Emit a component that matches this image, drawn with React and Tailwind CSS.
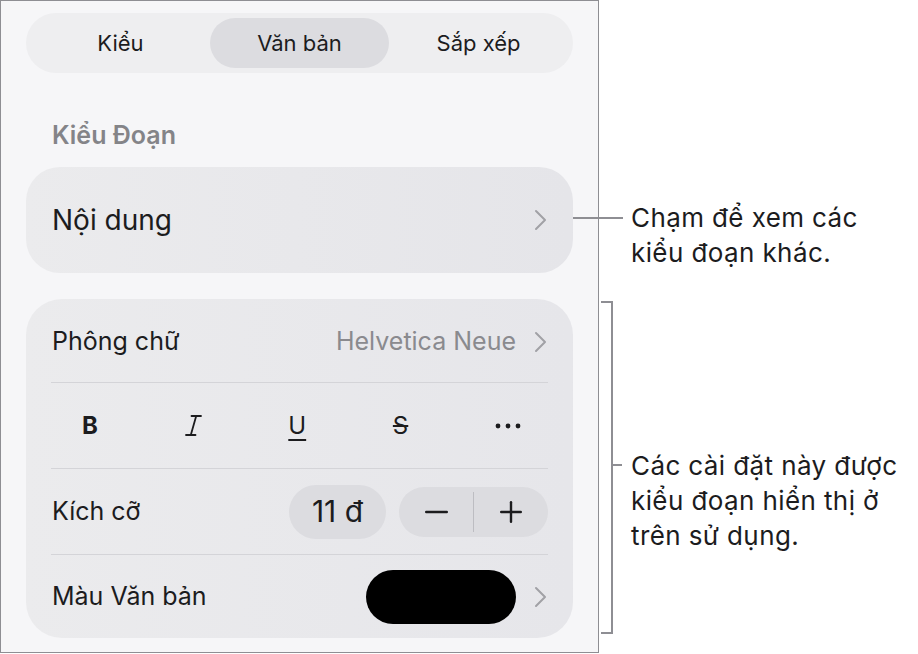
import React from "react";

const Chevron = () => (
  <svg width="13" height="22" viewBox="0 0 13 22" fill="none" className="shrink-0">
    <polyline points="2,2 11,11 2,20" stroke="#a1a1a6" strokeWidth="2" strokeLinecap="round" strokeLinejoin="round" />
  </svg>
);

const Divider = () => <div className="mx-[25px] h-px bg-[#d4d4d8]" />;

const Segment = () => {
  const tabs = ["Kiểu", "Văn bản", "Sắp xếp"];
  return (
    <div className="flex h-[60px] items-center rounded-full bg-[#eeeef0] px-[5px]">
      {tabs.map((t, i) => (
        <div
          key={t}
          className={`flex h-[50px] flex-1 items-center justify-center rounded-full text-[22px] text-[#1c1c1e] ${
            i === 1 ? "bg-[#dcdce0]" : ""
          }`}
        >
          {t}
        </div>
      ))}
    </div>
  );
};

const StyleButtons = () => (
  <div className="flex h-[85px] items-center justify-between pl-[56px] pr-[52px] text-[#1c1c1e]">
    <span className="text-[24px] font-bold">B</span>
    <svg width="17" height="23" viewBox="0 0 17 23" fill="none">
      <path d="M6.5 2h9.5M1 21h9.5M11.2 2L5.8 21" stroke="#1c1c1e" strokeWidth="1.8" strokeLinecap="round" />
    </svg>
    <span className="text-[24px] underline decoration-[1.5px] underline-offset-[5px]">U</span>
    <span className="text-[24px] line-through decoration-[1.5px]">S</span>
    <svg width="26" height="6" viewBox="0 0 26 6">
      <circle cx="3" cy="3" r="2.4" fill="#1c1c1e" />
      <circle cx="13" cy="3" r="2.4" fill="#1c1c1e" />
      <circle cx="23" cy="3" r="2.4" fill="#1c1c1e" />
    </svg>
  </div>
);

export default function App() {
  return (
    <div
      className="relative h-[654px] w-[918px] bg-white"
      style={{ fontFamily: "Inter, 'Noto Sans', sans-serif" }}
    >
      {/* Inspector panel */}
      <div className="flex h-[653px] w-[599px] flex-col border border-[#8e8e93] bg-[#f6f6f8] px-[25px] pt-[12px]">
        <Segment />

        <div className="mt-[47px] pl-[26px] text-[25px] font-semibold leading-[30px] text-[#848488]">
          Kiểu Đoạn
        </div>

        <div className="mt-[17px] flex h-[106px] items-center justify-between rounded-[34px] bg-gradient-to-r from-[#ebebed] to-[#e5e5e9] pl-[26px] pr-[26px]">
          <span className="text-[28px] text-[#1c1c1e]">Nội dung</span>
          <Chevron />
        </div>

        <div className="mt-[26px] flex h-[339px] flex-col rounded-[36px] bg-gradient-to-r from-[#ebebed] to-[#e6e6ea] pt-[2px]">
          <div className="flex h-[81px] items-center justify-between pl-[26px] pr-[26px] text-[25px]">
            <span className="text-[#1c1c1e]">Phông chữ</span>
            <div className="flex items-center gap-[18px]">
              <span className="text-[#8a8a8e]">Helvetica Neue</span>
              <Chevron />
            </div>
          </div>
          <Divider />
          <StyleButtons />
          <Divider />
          <div className="flex h-[85px] items-center justify-between pl-[26px] pr-[25px] text-[25px]">
            <span className="text-[#1c1c1e]">Kích cỡ</span>
            <div className="flex items-center gap-[13px]">
              <div className="flex h-[54px] w-[97px] items-center justify-center rounded-full bg-[#dcdce0] text-[30px] text-[#1c1c1e]">
                11 đ
              </div>
              <div className="flex h-[50px] w-[149px] items-center rounded-full bg-[#dcdce0]">
                <div className="flex flex-1 items-center justify-center">
                  <svg width="23" height="4" viewBox="0 0 23 4">
                    <rect x="0" y="0.8" width="23" height="2.4" rx="1.2" fill="#1c1c1e" />
                  </svg>
                </div>
                <div className="h-[40px] w-px bg-[#bdbdc2]" />
                <div className="flex flex-1 items-center justify-center">
                  <svg width="22" height="22" viewBox="0 0 22 22">
                    <rect x="0" y="9.8" width="22" height="2.4" rx="1.2" fill="#1c1c1e" />
                    <rect x="9.8" y="0" width="2.4" height="22" rx="1.2" fill="#1c1c1e" />
                  </svg>
                </div>
              </div>
            </div>
          </div>
          <Divider />
          <div className="flex flex-1 items-center justify-between pl-[26px] pr-[26px] text-[25px]">
            <span className="text-[#1c1c1e]">Màu Văn bản</span>
            <div className="flex items-center gap-[18px]">
              <div className="h-[54px] w-[150px] rounded-full bg-black" />
              <Chevron />
            </div>
          </div>
        </div>
      </div>

      {/* Callout 1 */}
      <div className="absolute left-[573px] top-[200px] flex items-start">
        <div className="mt-[17px] h-[2px] w-[50px] bg-[#8e8e93]" />
        <div className="ml-[8px] text-[26px] leading-[35px] tracking-[0.4px] text-[#1c1c1e]">
          Chạm để xem các
          <br />
          kiểu đoạn khác.
        </div>
      </div>

      {/* Callout 2 bracket */}
      <div className="absolute left-[601px] top-[301px] h-[333px] w-[12px] border-y-2 border-r-2 border-[#8e8e93]" />
      <div className="absolute left-[612px] top-[448px] flex items-start">
        <div className="mt-[16px] h-[2px] w-[10px] bg-[#8e8e93]" />
        <div className="ml-[9px] text-[26px] leading-[35px] tracking-[0.4px] text-[#1c1c1e]">
          Các cài đặt này được
          <br />
          kiểu đoạn hiển thị ở
          <br />
          trên sử dụng.
        </div>
      </div>
    </div>
  );
}
